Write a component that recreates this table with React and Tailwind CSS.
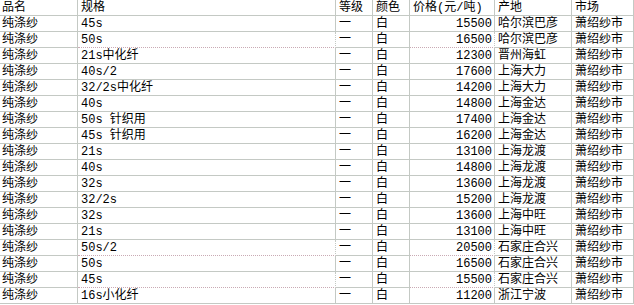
const rows = [
  ["45s", "15500", "哈尔滨巴彦"],
  ["50s", "16500", "哈尔滨巴彦"],
  ["21s中化纤", "12300", "晋州海虹"],
  ["40s/2", "17600", "上海大力"],
  ["32/2s中化纤", "14200", "上海大力"],
  ["40s", "14800", "上海金达"],
  ["50s 针织用", "17400", "上海金达"],
  ["45s 针织用", "16200", "上海金达"],
  ["21s", "13100", "上海龙渡"],
  ["40s", "14800", "上海龙渡"],
  ["32s", "13600", "上海龙渡"],
  ["32/2s", "15200", "上海龙渡"],
  ["32s", "13600", "上海中旺"],
  ["21s", "13100", "上海中旺"],
  ["50s/2", "20500", "石家庄合兴"],
  ["50s", "16500", "石家庄合兴"],
  ["45s", "15500", "石家庄合兴"],
  ["16s小化纤", "11200", "浙江宁波"],
];

// rows whose bottom line is the dotted page-break line
const dotted = [1, 14, 16];

function Cell({ children, right, dot }) {
  return (
    <div
      className={
        "h-[16px] border-r border-b border-r-[#c4c9c4] pt-[1px] leading-[15px] whitespace-nowrap overflow-hidden " +
        (dot ? "border-b-[#c9aab4] border-dotted border-r-solid" : "border-b-[#c4c9c4]") +
        (right ? " text-right pr-[2px]" : " pl-[3px]")
      }
    >
      {children}
    </div>
  );
}

export default function App() {
  return (
    <div
      className="w-[634px] h-[305px] bg-white text-black text-[12px] overflow-hidden"
      style={{ fontFamily: '"Liberation Mono", "Noto Sans CJK SC", monospace' }}
    >
      <div className="grid grid-cols-[78px_258px_37px_37px_85px_77px_62px]">
        <div className="h-[16px] border-r border-b border-[#c4c9c4] pl-[2px] pt-[1px] leading-[15px]">品名</div>
        <Cell>规格</Cell>
        <Cell>等级</Cell>
        <Cell>颜色</Cell>
        <div className="h-[16px] border-r border-b border-[#c4c9c4] pl-[3px] pt-[1px] leading-[15px] whitespace-nowrap overflow-hidden">
          价格(元/吨)
        </div>
        <Cell>产地</Cell>
        <Cell>市场</Cell>

        {rows.map((r, i) => {
          const dot = dotted.includes(i);
          return [
            <div
              key={i + "a"}
              className="h-[16px] border-r border-b border-[#c4c9c4] pl-[2px] pt-[1px] leading-[15px]"
            >
              纯涤纱
            </div>,
            <Cell key={i + "b"} dot={dot}>{r[0]}</Cell>,
            <Cell key={i + "c"}>一</Cell>,
            <Cell key={i + "d"}>白</Cell>,
            <Cell key={i + "e"} right dot={dot}>{r[1]}</Cell>,
            <Cell key={i + "f"}>{r[2]}</Cell>,
            <Cell key={i + "g"}>萧绍纱市</Cell>,
          ];
        })}
      </div>
    </div>
  );
}
